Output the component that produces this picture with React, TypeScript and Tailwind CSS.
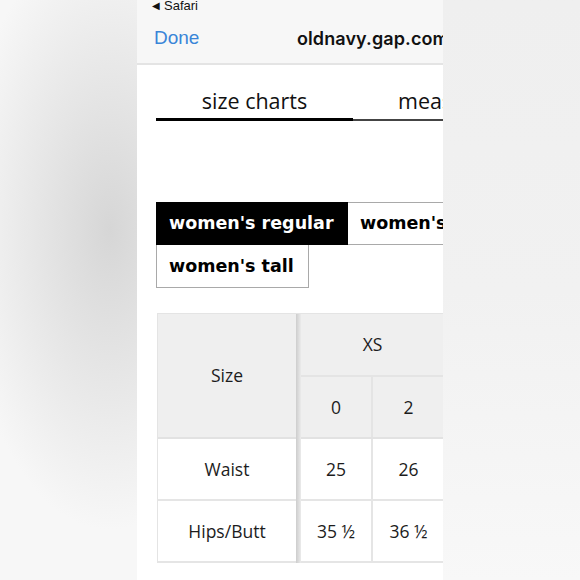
import React from 'react'

const tableFont = { fontFamily: '"Open Sans", "Noto Sans", sans-serif' }

const SizeButton = ({ label, active, className = '' }: { label: string, active?: boolean, className?: string }) => (
    <div className={`shrink-0 h-[43px] flex items-center px-[12px] border border-[#a9a9a9] text-[17.5px] font-bold whitespace-nowrap ${active ? 'bg-black text-white border-black' : 'bg-white text-black'} ${className}`}
        style={{ fontFamily: '"DejaVu Sans", Verdana, sans-serif' }}>
        {label}
    </div>
)

const App: React.FC = () => {
    return (
        <div className="w-[580px] h-[580px] flex overflow-hidden bg-white">
            {/* blurred backdrop, left */}
            <div className="w-[137px] shrink-0 h-full bg-[radial-gradient(ellipse_150px_300px_at_110px_230px,#d6d6d6,#f7f7f7)]" />

            {/* phone screen */}
            <div className="w-[306px] shrink-0 h-full overflow-hidden bg-white">
                <div className="w-[560px]">
                    <div className="h-[65px] bg-[#f7f7f7] border-b-2 border-[#e4e4e4] relative"
                        style={{ fontFamily: '"Liberation Sans", Arial, sans-serif' }}>
                        <div className="absolute left-[15px] top-[-4px] text-[13px] text-[#111] flex items-center gap-[4px]">
                            <span className="text-[10px]">◀</span>
                            <span>Safari</span>
                        </div>
                        <div className="flex items-center h-full pt-[13px]">
                            <span className="ml-[17px] w-[143px] text-[19px] text-[#3a85d8]">Done</span>
                            <span className="text-[18px] font-semibold text-[#111] tracking-[0.1px]"
                                style={{ fontFamily: 'Inter, sans-serif' }}>oldnavy.gap.com</span>
                        </div>
                    </div>

                    {/* tabs */}
                    <div className="pl-[19px] pt-[22px] flex" style={{ fontFamily: '"Open Sans", sans-serif' }}>
                        <div className="w-[197px] shrink-0 flex flex-col items-center">
                            <span className="text-[21.5px] leading-[28px] text-[#111]">size charts</span>
                            <div className="mt-[3px] w-full h-[3px] bg-black" />
                        </div>
                        <div className="w-[300px] flex flex-col">
                            <span className="pl-[45px] text-[21.5px] leading-[28px] text-[#111] whitespace-nowrap">measurements</span>
                            <div className="mt-[4px] w-full h-[1.5px] bg-[#444]" />
                        </div>
                    </div>

                    {/* style buttons */}
                    <div className="pl-[19px] pt-[81px] flex flex-col">
                        <div className="flex">
                            <SizeButton label="women's regular" active className="w-[192px]" />
                            <SizeButton label="women's petite" className="border-l-0" />
                        </div>
                        <SizeButton label="women's tall" className="w-[153px] border-t-0 h-[43px]" />
                    </div>

                    {/* size table */}
                    <div className="pl-[20px] pt-[25px]" style={tableFont}>
                        <div className="flex border-t border-l border-[#e4e4e4] text-[17.5px] text-[#1c1c1c]">
                            <div className="w-[138px] shrink-0 flex flex-col bg-white">
                                <div className="h-[125px] bg-[#efefef] flex items-center justify-center border-b-2 border-[#e2e2e2]">Size</div>
                                <div className="h-[62px] flex items-center justify-center border-b-2 border-[#e5e5e5]">Waist</div>
                                <div className="h-[62px] flex items-center justify-center border-b-2 border-[#e5e5e5]">Hips/Butt</div>
                            </div>
                            <div className="w-[5px] shrink-0 bg-linear-to-r from-[#cdcdcd] to-[#ebebeb]" />
                            <div className="flex flex-col shrink-0">
                                <div className="flex h-[63px] bg-[#efefef] border-b-2 border-[#e4e4e4]">
                                    <div className="w-[145px] flex items-center justify-center border-r-2 border-[#e4e4e4]">XS</div>
                                    <div className="w-[146px] flex items-center justify-center">S</div>
                                </div>
                                <div className="flex h-[62px] bg-[#efefef] border-b-2 border-[#e2e2e2]">
                                    <div className="w-[72px] flex items-center justify-center border-r-2 border-[#e4e4e4]">0</div>
                                    <div className="w-[73px] flex items-center justify-center border-r-2 border-[#e4e4e4]">2</div>
                                    <div className="w-[73px] flex items-center justify-center">4</div>
                                </div>
                                <div className="flex h-[62px] border-b-2 border-[#e5e5e5]">
                                    <div className="w-[72px] flex items-center justify-center border-r-2 border-[#e5e5e5]">25</div>
                                    <div className="w-[73px] flex items-center justify-center border-r-2 border-[#e5e5e5]">26</div>
                                    <div className="w-[73px] flex items-center justify-center">27</div>
                                </div>
                                <div className="flex h-[62px] border-b-2 border-[#e5e5e5]">
                                    <div className="w-[72px] flex items-center justify-center border-r-2 border-[#e5e5e5]">35 ½</div>
                                    <div className="w-[73px] flex items-center justify-center border-r-2 border-[#e5e5e5]">36 ½</div>
                                    <div className="w-[73px] flex items-center justify-center">37 ½</div>
                                </div>
                            </div>
                        </div>
                    </div>
                </div>
            </div>

            {/* blurred backdrop, right */}
            <div className="flex-1 h-full bg-linear-to-b from-[#efefef] via-[#f1f1f1] to-[#f8f8f8]" />
        </div>
    )
}

export default App
